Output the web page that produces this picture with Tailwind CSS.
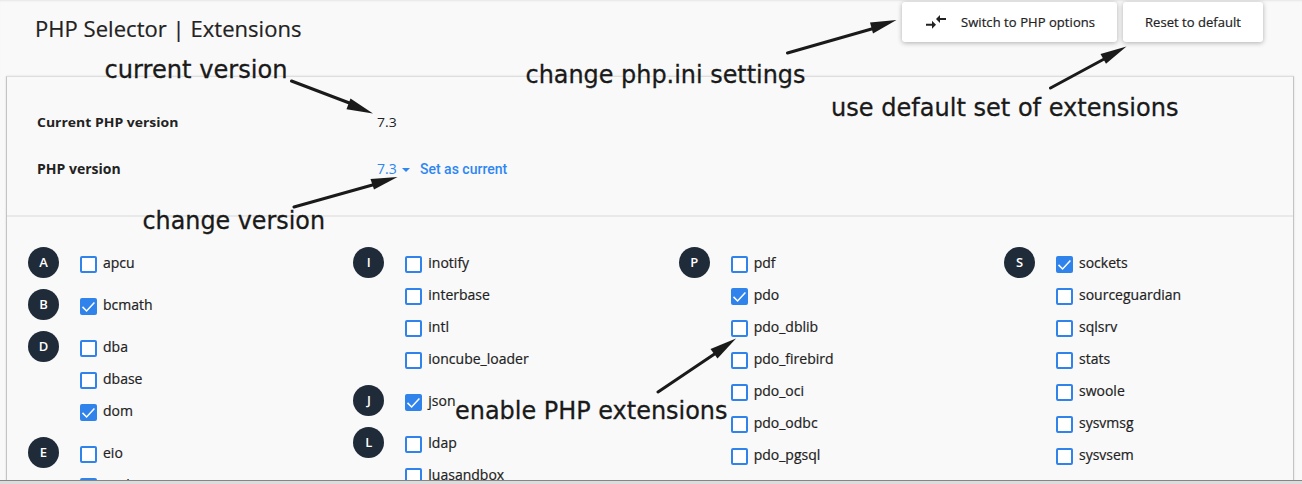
<!DOCTYPE html>
<html lang="en">
<head>
<meta charset="utf-8">
<title>PHP Selector | Extensions</title>
<script src="https://cdn.jsdelivr.net/npm/@tailwindcss/browser@4"></script>
</head>
<body class="bg-[#f9f9f9]">
<div class="relative flex flex-col w-[1302px] h-[484px] overflow-hidden bg-[#f9f9f9] font-['Open_Sans',sans-serif] text-[#222]">
  <header class="flex justify-between items-start h-[76px] shrink-0 pl-[35px] pr-[39px] pt-[2px] shadow-[inset_0_2px_2px_-1px_rgba(0,0,0,0.08)]">
    <h1 class="mt-[11px] text-[22px] leading-[30px] tracking-[0.04px] whitespace-nowrap [-webkit-text-stroke:0.200px_#222]">PHP Selector | Extensions</h1>
    <div class="flex gap-[6px]">
      <button class="flex items-center w-[215px] h-10 bg-white rounded-[3px] shadow-[0_1px_5px_rgba(0,0,0,0.3)] pl-[24px] text-[13px] whitespace-nowrap">
        <svg class="w-[20px] h-[14px] mr-[15px]" viewBox="0 0 20 14" fill="#222"><path d="M0 8.700h6V5.800l4 4L6 13.800v-3H0zM20 3.100h-6V0L10 4.100l4 4V5.100H20z"/></svg>
        <span class="mt-px tracking-[0.06px] [-webkit-text-stroke:0.200px_#222]">Switch to PHP options</span>
      </button>
      <button class="w-[140px] h-10 pt-px bg-white rounded-[3px] shadow-[0_1px_5px_rgba(0,0,0,0.3)] text-[13px] whitespace-nowrap tracking-[0.03px] [-webkit-text-stroke:0.200px_#222]">Reset to default</button>
    </div>
  </header>

  <main class="flex flex-col h-[420px] shrink-0 ml-[6px] mr-[8px] border border-[#dedede] border-l-[#c4c4c4] border-r-[#c4c4c4] shadow-[0_0_2px_rgba(0,0,0,0.12)]">
    <section class="flex flex-col h-[140px] shrink-0 pl-[30px] pt-[36px] border-b-2 border-[#e9e9e9] text-[13px]">
      <div class="flex h-[20px] items-center mb-[26px]">
        <div class="w-[340px]"><span class="inline-block font-bold origin-left scale-x-[1.075]">Current PHP version</span></div>
        <div class="origin-left scale-x-[1.075]">7.3</div>
      </div>
      <div class="flex h-[20px] items-center">
        <div class="w-[340px] font-bold text-[14px] -mt-px">PHP version</div>
        <div class="flex items-center text-[#2e86f2] font-['Roboto',sans-serif] font-medium text-[14px]">
          <span class="w-[25px] -mt-px font-medium font-['Open_Sans',sans-serif]">7.3</span>
          <svg class="w-[8px] h-[4px] mr-[10px] mt-px" viewBox="0 0 8 4" fill="#2e86f2"><path d="M0 0h8L4 4z"/></svg>
          <span>Set as current</span>
        </div>
      </div>
    </section>
    <section id="extensions" class="flex pl-[21px] pt-[30px]"></section>
  </main>

  <div class="absolute left-0 bottom-0 w-full h-[4px] bg-[#dcdcdc] border-t border-[#858585]"></div>

  <svg class="absolute left-0 top-0 w-[1302px] h-[484px] font-['DejaVu_Sans',sans-serif] text-[24px]" viewBox="0 0 1302 484" fill="#1a1a1a">
    <g stroke="#1a1a1a" stroke-width="0.300">
      <text x="104.500" y="78" textLength="183" lengthAdjust="spacingAndGlyphs">current version</text>
      <text x="142.500" y="229" textLength="182.500" lengthAdjust="spacingAndGlyphs">change version</text>
      <text x="525.500" y="83" textLength="280" lengthAdjust="spacingAndGlyphs">change php.ini settings</text>
      <text x="831" y="116" textLength="347.500" lengthAdjust="spacingAndGlyphs">use default set of extensions</text>
      <text x="455" y="419" textLength="272.500" lengthAdjust="spacingAndGlyphs">enable PHP extensions</text>
    </g>
    <g stroke="#1a1a1a" stroke-width="3" stroke-linecap="round">
      <path d="M291.500 81L352 104M294 207L376 184M787.500 53L875 28M1050.500 88L1106 58M658 392L716 353"/>
    </g>
    <path d="M373 113.500L350.500 98.500L346.500 109.200z"/>
    <path d="M397.500 177L370.500 179L374 189.500z"/>
    <path d="M896.500 20L870 22.500L873 33.500z"/>
    <path d="M1126.500 46.500L1100.500 54L1106 63.800z"/>
    <path d="M736 338.500L710.500 349L717.500 358.500z"/>
  </svg>
</div>

<script>
const columns = [
  [['A', ['apcu']], ['B', ['*bcmath']], ['D', ['dba', 'dbase', '*dom']], ['E', ['eio', '*enchant']]],
  [['I', ['inotify', 'interbase', 'intl', 'ioncube_loader']], ['J', ['*json']], ['L', ['ldap', 'luasandbox']]],
  [['P', ['pdf', '*pdo', 'pdo_dblib', 'pdo_firebird', 'pdo_oci', 'pdo_odbc', 'pdo_pgsql']]],
  [['S', ['*sockets', 'sourceguardian', 'sqlsrv', 'stats', 'swoole', 'sysvmsg', 'sysvsem']]],
];
const box = '<span class="w-[17px] h-[17px] mt-[9px] shrink-0 bg-white border-2 border-[#3083ea] rounded-[2px]"></span>';
const checked = '<span class="w-[17px] h-[17px] mt-[9px] shrink-0 bg-[#3083ea] rounded-[2px]"><svg class="w-[17px] h-[17px]" viewBox="0 0 17 17" fill="none" stroke="#fff" stroke-width="1.500"><path d="M2.500 8.900L6.600 13L14.400 4.600"/></svg></span>';
const item = n => `<label class="flex items-start h-[32px]">${n[0] === '*' ? checked : box}<span class="ml-[6px] mt-[6px] text-[14px] leading-[20px] whitespace-nowrap [-webkit-text-stroke:0.200px_#222]">${n.replace('*', '')}</span></label>`;
const group = ([letter, names]) => `<div class="flex items-start mb-[10px]"><div class="flex items-center justify-center w-[31px] h-[31px] pt-px mr-[21px] rounded-full bg-[#1f2b38] text-white text-[13px] font-semibold">${letter}</div><div>${names.map(item).join('')}</div></div>`;
document.getElementById('extensions').innerHTML = columns.map(c => `<div class="w-[325.33px] shrink-0">${c.map(group).join('')}</div>`).join('');
</script>
</body>
</html>
